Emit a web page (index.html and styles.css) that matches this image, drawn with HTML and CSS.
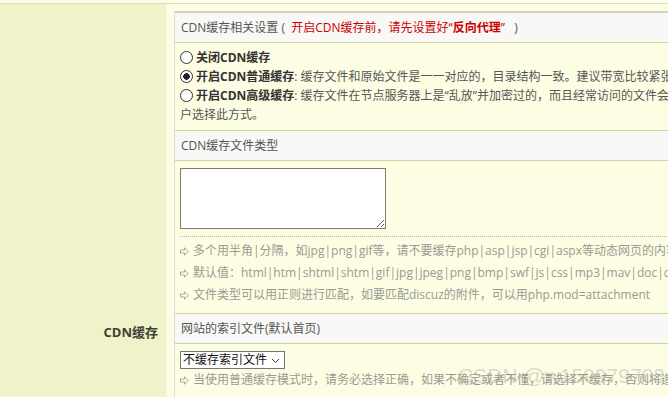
FILE: index.html
```html
<!DOCTYPE html>
<html>
<head>
  <meta charset="utf-8">
  <meta name="viewport" content="width=device-width, initial-scale=1.0">
  <title>CDN缓存设置</title>
  <link rel="stylesheet" href="styles.css">
</head>
<body>
  <div class="setting">
    <div class="setting-label">CDN缓存</div>
    <div class="setting-body">
      <div class="box">
        <div class="box-head">CDN缓存相关设置 (&nbsp;&nbsp;<span class="warn">开启CDN缓存前，请先设置好“<b>反向代理</b>”</span>&nbsp;&nbsp;&nbsp;)</div>
        <div class="box-item radios">
          <label class="radio-row"><input type="radio" name="cdn_mode" value="0"><b>关闭CDN缓存</b></label>
          <label class="radio-row"><input type="radio" name="cdn_mode" value="1" checked><b>开启CDN普通缓存</b>: 缓存文件和原始文件是一一对应的，目录结构一致。建议带宽比较紧张、服务器硬盘空间有限的用户选择此方式。</label>
          <label class="radio-row"><input type="radio" name="cdn_mode" value="2"><b>开启CDN高级缓存</b>: 缓存文件在节点服务器上是“乱放”并加密过的，而且经常访问的文件会保存在内存中，速度更快，建议服务器配置较高的用<br>户选择此方式。</label>
        </div>

        <div class="box-head">CDN缓存文件类型</div>
        <div class="box-item">
          <textarea class="types" name="cdn_types"></textarea>
          <div class="tips">
            <div class="tip"><svg class="tip-icon" width="9" height="9" viewBox="0 0 9 9"><path d="M0.5 3h4V0.8L8.3 4.5 4.5 8.2V6h-4z" fill="none" stroke="#a8a8a0" stroke-width="1"/></svg>多个用半角|分隔，如jpg|png|gif等，请不要缓存php|asp|jsp|cgi|aspx等动态网页的内容，否则可能导致网站出错。</div>
            <div class="tip"><svg class="tip-icon" width="9" height="9" viewBox="0 0 9 9"><path d="M0.5 3h4V0.8L8.3 4.5 4.5 8.2V6h-4z" fill="none" stroke="#a8a8a0" stroke-width="1"/></svg>默认值：html|htm|shtml|shtm|gif|jpg|jpeg|png|bmp|swf|js|css|mp3|mav|doc|docx|xls|xlsx|rar|zip</div>
            <div class="tip"><svg class="tip-icon" width="9" height="9" viewBox="0 0 9 9"><path d="M0.5 3h4V0.8L8.3 4.5 4.5 8.2V6h-4z" fill="none" stroke="#a8a8a0" stroke-width="1"/></svg>文件类型可以用正则进行匹配，如要匹配discuz的附件，可以用php.mod=attachment</div>
          </div>
        </div>

        <div class="box-head">网站的索引文件(默认首页)</div>
        <div class="box-item">
          <div class="select-wrap">
            <select name="cdn_index">
              <option>不缓存索引文件</option>
              <option>缓存索引文件</option>
            </select>
            <svg class="select-arrow" width="9" height="6" viewBox="0 0 9 6"><path d="M1 1l3.5 3.5L8 1" fill="none" stroke="#333" stroke-width="1"/></svg>
          </div>
          <div class="tip"><svg class="tip-icon" width="9" height="9" viewBox="0 0 9 9"><path d="M0.5 3h4V0.8L8.3 4.5 4.5 8.2V6h-4z" fill="none" stroke="#a8a8a0" stroke-width="1"/></svg>当使用普通缓存模式时，请务必选择正确，如果不确定或者不懂，请选择不缓存，否则将造成网站无法访问。</div>
        </div>
      </div>
    </div>
  </div>

  <div class="watermark">CSDN @w15997970340</div>
</body>
</html>
```

FILE: styles.css
```css
*, *::before, *::after {
  box-sizing: border-box;
}

html, body {
  margin: 0;
  padding: 0;
  overflow: hidden;
}

body {
  font-family: "Open Sans", "Noto Sans CJK SC", sans-serif;
  font-size: 12px;
  color: #555;
  background-color: #fdfde4;
  padding-top: 3px;
  width: 1100px;
}

.setting {
  display: flex;
  border-top: 1px solid #dcdcd0;
}

.setting-label {
  width: 167px;
  flex: none;
  background-color: #f0f2c9;
  border-right: 1px solid #f7f7e0;
  text-align: right;
  padding: 318px 8px 0 0;
  font-size: 13px;
  font-weight: bold;
  color: #3f3f33;
}

.setting-body {
  flex: 1;
  padding: 7px 0 0 7px;
}

.box {
  border-top: 2px solid #d2d2cc;
  border-left: 1px solid #dcdcd0;
}

.box-head {
  height: 30px;
  line-height: 29px;
  padding: 0 6px;
  background-color: #f8f8f6;
  border-bottom: 1px solid #d3d39d;
  color: #555;
  font-size: 12px;
  white-space: nowrap;
}

.warn {
  color: #cc0000;
}

.warn b {
  font-weight: bold;
}

.box-item {
  padding: 7px 5px 7px;
  border-bottom: 1px solid #d3d39d;
  white-space: nowrap;
}

.radios {
  padding: 5px 5px 6px;
}

.radio-row {
  display: block;
  line-height: 19px;
  color: #555;
}

.radio-row b {
  color: #333;
}

.radio-row input {
  appearance: none;
  -webkit-appearance: none;
  width: 13px;
  height: 13px;
  margin: 0 3px 0 0;
  vertical-align: -2px;
  border: 1px solid #333;
  border-radius: 50%;
  background-color: #fff;
}

.radio-row input:checked {
  background: radial-gradient(circle, #222 0, #222 3px, #fff 3.6px);
}

.types {
  display: block;
  width: 206px;
  height: 61px;
  border: 1px solid #7c7c70;
  background-color: #fff;
  margin: 0 0 7px 0;
  font-family: inherit;
}

.tips {
  border-top: 1px dotted #b8b8b0;
  padding-top: 3px;
}

.tip {
  line-height: 22px;
  color: #9a9a92;
}

.tip-icon {
  margin-right: 4px;
  vertical-align: -1px;
}

.select-wrap {
  position: relative;
  display: inline-block;
  margin-top: -1px;
}

.select-wrap select {
  appearance: none;
  -webkit-appearance: none;
  width: 105px;
  height: 18px;
  padding: 0 16px 0 2px;
  border: 1px solid #767676;
  border-radius: 0;
  background-color: #fff;
  font-family: inherit;
  font-size: 12px;
  line-height: 16px;
  color: #111;
}

.select-arrow {
  position: absolute;
  right: 5px;
  top: 7px;
  pointer-events: none;
}

.watermark {
  position: absolute;
  left: 458px;
  top: 364px;
  font-size: 21px;
  color: rgba(150, 150, 140, 0.35);
  font-family: "Liberation Sans", sans-serif;
  white-space: nowrap;
}
```
